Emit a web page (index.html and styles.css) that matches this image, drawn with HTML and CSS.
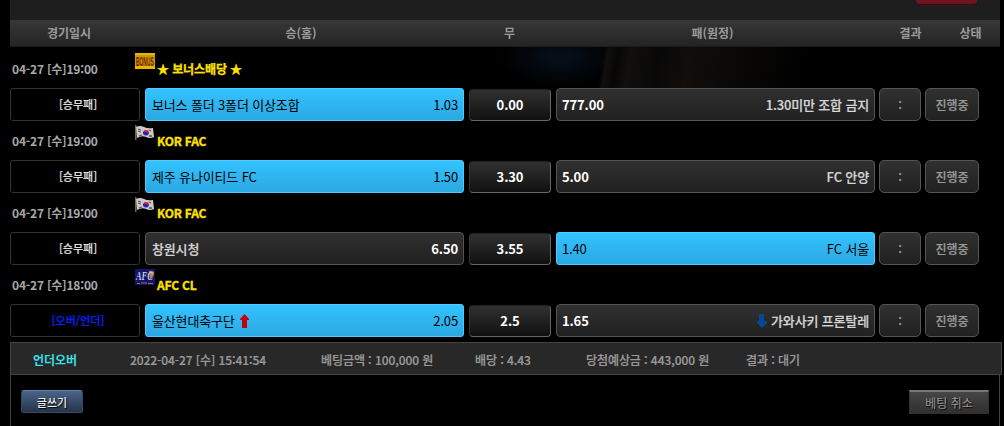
FILE: index.html
```
<!DOCTYPE html>
<html lang="ko">
<head>
	<meta charset="UTF-8">
	<meta name="viewport" content="width=device-width, initial-scale=1.0">
	<title>베팅내역</title>
	<link rel="stylesheet" href="styles.css">
</head>
<body>
	<div class="wrap">
		<div class="top-bar"><div class="red-btn"></div></div>

		<div class="list-head">
			<div class="h-date">경기일시</div>
			<div class="h-home">승(홈)</div>
			<div class="h-draw">무</div>
			<div class="h-away">패(원정)</div>
			<div class="h-result">결과</div>
			<div class="h-state">상태</div>
		</div>

		<div class="games">
			<!-- 보너스 -->
			<div class="game">
				<div class="league">
					<div class="date">04-27 [수]19:00</div>
					<svg class="flag" width="20" height="16" viewBox="0 0 20 16">
						<rect width="20" height="16" fill="#e8b800"/>
						<rect y="2" width="20" height="11" fill="#cf9800"/>
						<text class="bonus-text" transform="translate(1 12.5) scale(.41 1)">BONUS</text>
					</svg>
					<div class="league-name star">★ 보너스배당 ★</div>
				</div>
				<div class="row">
					<div class="type">[승무패]</div>
					<div class="team on"><span>보너스 폴더 3폴더 이상조합</span><span class="rate">1.03</span></div>
					<div class="draw">0.00</div>
					<div class="team away"><span class="rate">777.00</span><span>1.30미만 조합 금지</span></div>
					<div class="score">:</div>
					<div class="state">진행중</div>
				</div>
			</div>

			<!-- KOR FAC -->
			<div class="game">
				<div class="league">
					<div class="date">04-27 [수]19:00</div>
					<svg class="flag" width="20" height="16" viewBox="0 0 20 16">
						<path d="M0 0h1.5v15H0z" fill="#75675c"/>
						<path d="M1 2q4-2 8 0t9 1l1 9q-4 2-8 0t-9 1z" fill="#cfcaca"/>
						<path d="M3 4l3 1M3 6l3 1M14 5l2 1M14 11l3 0M4 11l3-1" stroke="#555" stroke-width="1.3"/>
						<path d="M8 8a3 3 0 0 1 6 0z" fill="#e01b28"/>
						<path d="M8 7a3 3 0 0 0 6 1l-3-1z" fill="#2424c8"/>
					</svg>
					<div class="league-name">KOR FAC</div>
				</div>
				<div class="row">
					<div class="type">[승무패]</div>
					<div class="team on"><span>제주 유나이티드 FC</span><span class="rate">1.50</span></div>
					<div class="draw">3.30</div>
					<div class="team away"><span class="rate">5.00</span><span>FC 안양</span></div>
					<div class="score">:</div>
					<div class="state">진행중</div>
				</div>
			</div>

			<div class="game">
				<div class="league">
					<div class="date">04-27 [수]19:00</div>
					<svg class="flag" width="20" height="16" viewBox="0 0 20 16">
						<path d="M0 0h1.5v15H0z" fill="#75675c"/>
						<path d="M1 2q4-2 8 0t9 1l1 9q-4 2-8 0t-9 1z" fill="#cfcaca"/>
						<path d="M3 4l3 1M3 6l3 1M14 5l2 1M14 11l3 0M4 11l3-1" stroke="#555" stroke-width="1.3"/>
						<path d="M8 8a3 3 0 0 1 6 0z" fill="#e01b28"/>
						<path d="M8 7a3 3 0 0 0 6 1l-3-1z" fill="#2424c8"/>
					</svg>
					<div class="league-name">KOR FAC</div>
				</div>
				<div class="row">
					<div class="type">[승무패]</div>
					<div class="team"><span>창원시청</span><span class="rate">6.50</span></div>
					<div class="draw">3.55</div>
					<div class="team away on"><span class="rate">1.40</span><span>FC 서울</span></div>
					<div class="score">:</div>
					<div class="state">진행중</div>
				</div>
			</div>

			<!-- AFC CL -->
			<div class="game">
				<div class="league">
					<div class="date">04-27 [수]18:00</div>
					<svg class="flag" width="20" height="16" viewBox="0 0 20 16">
						<rect width="20" height="16" fill="#14146c"/>
						<path d="M14 2q5-1 5 3-1 4-4 5z" fill="#b58b4c"/>
						<text class="afc-text" transform="translate(1 11) scale(.7 1)">AFC</text>
						<path d="M2 14.5h3M6 14h6M13 14.5h5" stroke="#9a704e"/>
					</svg>
					<div class="league-name">AFC CL</div>
				</div>
				<div class="row">
					<div class="type over">[오버/언더]</div>
					<div class="team on">
						<span>울산현대축구단 <svg class="arrow up" width="9" height="14" viewBox="0 0 9 14"><path d="M4.5 0L9 5v1H7v8H2V6H0V5z" fill="#c4000c"/></svg></span>
						<span class="rate">2.05</span>
					</div>
					<div class="draw">2.5</div>
					<div class="team away">
						<span class="rate">1.65</span>
						<span><svg class="arrow down" width="10" height="14" viewBox="0 0 10 14"><path d="M2 0h5v7h3v2l-5 5-5-5V7h2z" fill="#004b93"/></svg> 가와사키 프론탈레</span>
					</div>
					<div class="score">:</div>
					<div class="state">진행중</div>
				</div>
			</div>
		</div>

		<div class="summary">
			<div class="kind">언더오버</div>
			<div>2022-04-27 [수] 15:41:54</div>
			<div>베팅금액 : 100,000 원</div>
			<div>배당 : 4.43</div>
			<div>당첨예상금 : 443,000 원</div>
			<div>결과 : 대기</div>
		</div>

		<div class="bottom">
			<button class="btn-write">글쓰기</button>
			<button class="btn-cancel">베팅 취소</button>
		</div>
	</div>
</body>
</html>
```
FILE: styles.css
```
* {
	box-sizing: border-box;
}

body {
	margin: 0;
	background: #000;
	color: #9a9a9a;
	font-family: "Noto Sans CJK KR", sans-serif;
	font-size: 12px;
	font-weight: 500;
	overflow: hidden;
}

.wrap {
	width: 992px;
	height: 426px;
	margin-left: 10px;
	display: flex;
	flex-direction: column;
	white-space: nowrap;
}

.top-bar {
	width: 990px;
	height: 20px;
	padding-left: 906px;
	background: #1e1e1e;
}

.red-btn {
	width: 61px;
	height: 5px;
	border-radius: 0 0 4px 4px;
	background: #701321;
	border-bottom: 1px solid #420812;
}

/* 헤더 */
.list-head {
	display: grid;
	grid-template-columns: 118px 346px 71px 335px 61px 59px;
	width: 990px;
	height: 27px;
	line-height: 26px;
	text-align: center;
	background: linear-gradient(#373737, #242424);
	border-bottom: 1px solid #1b1b1b;
	font-weight: 700;
}

/* 경기 목록 */
.games {
	height: 295px;
	padding-top: 2px;
	background:
		radial-gradient(ellipse 60px 30px at 550px 10px, #07101b, transparent),
		linear-gradient(100deg, transparent 586px, #12100e 590px, #070605 600px, #12100e 612px, #080808 640px, #110e0c 670px, transparent 790px) 0 0 / 100% 41px no-repeat;
}

.game {
	height: 72px;
}

.league {
	display: flex;
	height: 39px;
	line-height: 39px;
}

.date {
	width: 125px;
	padding-left: 2px;
	font-weight: 700;
	color: #a9a9a9;
	letter-spacing: -0.2px;
}

.flag {
	margin-top: 4px;
	margin-right: 2px;
}

.bonus-text {
	font: 700 12px "Liberation Sans", sans-serif;
	fill: #6e1c00;
}

.afc-text {
	font: italic 700 12px "Liberation Serif", serif;
	fill: #c8c8e8;
}

.league-name {
	color: #ffe100;
	font-weight: 700;
	letter-spacing: -0.2px;
	-webkit-text-stroke: 0.3px;
}

.league-name.star {
	letter-spacing: -0.1px;
}

.row {
	display: flex;
	height: 33px;
	line-height: 31px;
}

.type {
	width: 130px;
	margin-right: 5px;
	padding-left: 6px;
	border: 1px solid #333;
	border-radius: 3px;
	background: #000;
	color: #ddd;
	font-size: 11px;
	text-align: center;
	-webkit-text-stroke: 0.2px;
}

.type.over {
	color: #0022ff;
}

.team {
	display: flex;
	justify-content: space-between;
	width: 319px;
	padding: 0 5px 0 6px;
	border: 1px solid #555;
	border-radius: 4px;
	background: linear-gradient(#303030, #212121);
	color: #d5d5d5;
	font-size: 13px;
	letter-spacing: -0.15px;
	-webkit-text-stroke: 0.2px;
}

.team.away {
	padding-left: 5px;
}

.team .rate {
	color: #fff;
	font-weight: 700;
	-webkit-text-stroke: 0;
}

.team.on,
.team.on .rate {
	color: #000;
	font-weight: 400;
	-webkit-text-stroke: 0;
}

.team.on {
	border-color: #4bcbff;
	border-radius: 3px;
	background: linear-gradient(#33c3ff, #2ba8e2);
}

.arrow {
	vertical-align: -2px;
}

.arrow.up {
	margin-left: 2px;
}

.arrow.down {
	margin-right: 1px;
}

.draw {
	width: 82px;
	height: 32px;
	margin: 1px 5px 0;
	border: 1px solid #666;
	border-top-color: #222;
	border-left-color: #333;
	border-radius: 4px;
	background: linear-gradient(#303030, #111);
	color: #fff;
	font-size: 13px;
	font-weight: 700;
	line-height: 29px;
	letter-spacing: -0.1px;
	text-align: center;
}

.score,
.state {
	width: 42px;
	margin-left: 4px;
	border: 1px solid #555;
	border-radius: 5px;
	background: linear-gradient(#303030, #212121);
	text-align: center;
	-webkit-text-stroke: 0.2px;
}

.state {
	width: 54px;
}

/* 베팅 정보 */
.summary {
	display: grid;
	grid-template-columns: 97px 191px 154px 111px 160px auto;
	height: 33px;
	padding-left: 22px;
	line-height: 34px;
	letter-spacing: -0.08px;
	border: 1px solid #444;
	background: #282828;
	-webkit-text-stroke: 0.2px;
}

.kind {
	color: #38dfe4;
	font-weight: 700;
	-webkit-text-stroke: 0;
}

.bottom {
	flex: 1;
	display: flex;
	justify-content: space-between;
	align-items: flex-start;
	width: 990px;
	padding: 15px 10px 0;
	border: solid #444;
	border-width: 0 1px;
}

button {
	padding: 0;
	font-family: inherit;
	text-shadow: 1px 1px 1px #000;
}

.btn-write {
	width: 62px;
	height: 23px;
	border: 1px solid #344a66;
	border-top-color: #6382a9;
	border-radius: 3px;
	background: linear-gradient(#486489, #263548);
	color: #eee;
	font-size: 11px;
	font-weight: 500;
	line-height: 20px;
}

.btn-cancel {
	width: 80px;
	height: 24px;
	border: 1px solid #303030;
	border-top: 2px solid #777;
	background: linear-gradient(#464646, #303030);
	color: #999;
	font-size: 12px;
	line-height: 20px;
}
```
